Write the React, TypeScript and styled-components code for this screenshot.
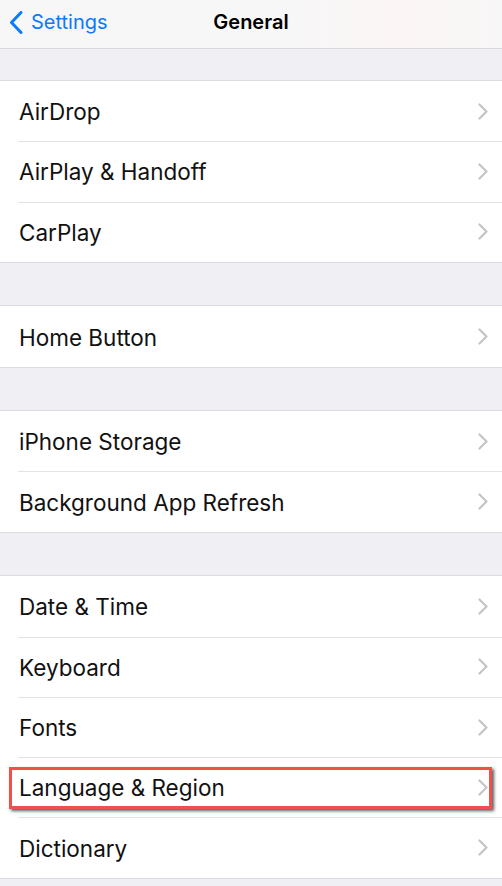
import React from 'react';
import styled, { createGlobalStyle } from 'styled-components';

const GlobalStyle = createGlobalStyle`
  html, body {
    margin: 0;
    padding: 0;
    background: #efeff4;
    font-family: Inter, "Liberation Sans", Arial, sans-serif;
    -webkit-font-smoothing: antialiased;
  }
`;

const Page = styled.div`
  width: 502px;
  min-height: 886px;
  background: #efeff4;
  overflow: hidden;
`;

const NavBar = styled.div`
  height: 44px;
  padding-bottom: 4px;
  display: grid;
  grid-template-columns: 1fr auto 1fr;
  align-items: center;
  background: linear-gradient(90deg, #f7f7f7 0%, #f8f7f7 60%, #fbf6f5 80%, #f8f7f7 100%);
  border-bottom: 1px solid #d9d9dc;
`;

const BackButton = styled.div`
  display: flex;
  align-items: center;
  gap: 8px;
  padding-left: 9px;
  color: #0a7aff;
  font-size: 20px;
  svg {
    display: block;
  }
`;

const Title = styled.div`
  font-size: 20px;
  font-weight: 600;
  color: #000;
`;

const Gap = styled.div<{ $size: number }>`
  height: ${({ $size }) => $size}px;
`;

const Group = styled.div`
  background: #fff;
  border-top: 1px solid #dcdce0;
  border-bottom: 1px solid #dcdce0;
`;

const Row = styled.div`
  position: relative;
  height: 60.3px;
  display: flex;
  align-items: center;
  padding: 0 14px 0 19px;

  & + &::before {
    content: '';
    position: absolute;
    top: 0;
    left: 18px;
    right: 0;
    border-top: 1px solid #e3e3e6;
  }
`;

const Label = styled.span`
  flex: 1;
  font-size: 22.5px;
  color: #111;
  padding-top: 1px;
`;

const Chevron = styled.svg`
  width: 10px;
  height: 17px;
  display: block;
`;

const Highlight = styled.div`
  position: absolute;
  left: 9px;
  right: 10px;
  top: 10px;
  height: 42px;
  box-sizing: border-box;
  border: 3px solid #ef5049;
  box-shadow: 2px 2px 3px rgba(0, 0, 0, 0.65);
  pointer-events: none;
`;

const groups: string[][] = [
  ['AirDrop', 'AirPlay & Handoff', 'CarPlay'],
  ['Home Button'],
  ['iPhone Storage', 'Background App Refresh'],
  ['Date & Time', 'Keyboard', 'Fonts', 'Language & Region', 'Dictionary'],
];

const ChevronIcon = () => (
  <Chevron viewBox="0 0 10 17">
    <path d="M1.5 1.5 L8.5 8.5 L1.5 15.5" fill="none" stroke="#c4c4c8" strokeWidth="2.2" strokeLinecap="round" strokeLinejoin="round" />
  </Chevron>
);

export default function App() {
  return (
    <Page>
      <GlobalStyle />
      <NavBar>
        <BackButton>
          <svg width="14" height="23" viewBox="0 0 14 23">
            <path d="M12 1.5 L2.5 11.5 L12 21.5" fill="none" stroke="#0a7aff" strokeWidth="3" strokeLinecap="round" strokeLinejoin="round" />
          </svg>
          <span>Settings</span>
        </BackButton>
        <Title>General</Title>
        <div />
      </NavBar>
      <Gap $size={31} />
      {groups.map((items, gi) => (
        <React.Fragment key={gi}>
          {gi > 0 && <Gap $size={42.5} />}
          <Group>
            {items.map((item) => (
              <Row key={item}>
                <Label>{item}</Label>
                <ChevronIcon />
                {item === 'Language & Region' && <Highlight />}
              </Row>
            ))}
          </Group>
        </React.Fragment>
      ))}
    </Page>
  );
}
